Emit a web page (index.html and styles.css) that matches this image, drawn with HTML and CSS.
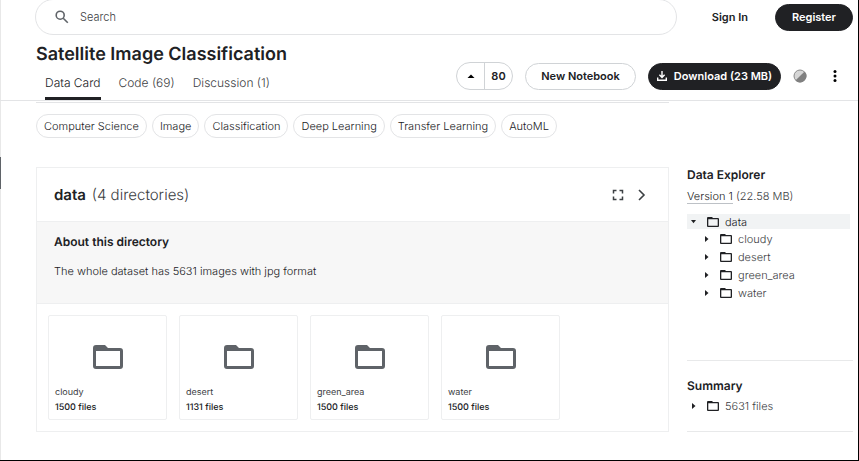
FILE: index.html
```html
<!DOCTYPE html>
<html lang="en">
<head>
    <meta charset="UTF-8">
    <meta name="viewport" content="width=device-width, initial-scale=1.0">
    <title>Satellite Image Classification</title>
    <link rel="stylesheet" href="styles.css">
</head>
<body>
    <svg class="defs" aria-hidden="true">
        <symbol id="folder" viewBox="0 0 30 24">
            <path fill-rule="evenodd" d="M3 0h9l3 3h12a3 3 0 0 1 3 3v15a3 3 0 0 1-3 3H3a3 3 0 0 1-3-3V3a3 3 0 0 1 3-3zM3 6v15h24V6z"/>
        </symbol>
        <symbol id="folder-small" viewBox="0 0 12 10">
            <path fill-rule="evenodd" d="M1 0h4l1 1h5a1 1 0 0 1 1 1v7a1 1 0 0 1-1 1H1a1 1 0 0 1-1-1V1a1 1 0 0 1 1-1zM1.3 2.3v6.4h9.4V2.3z"/>
        </symbol>
    </svg>

    <div class="page">
        <header class="header">
            <div class="topbar">
                <label class="search">
                    <svg width="14" height="14" viewBox="0 0 14 14" fill="none" stroke="#5f6368" stroke-width="1.6" aria-hidden="true">
                        <circle cx="5.2" cy="5.2" r="4"/>
                        <path d="M8.2 8.2l4.6 4.6"/>
                    </svg>
                    <input type="search" placeholder="Search" aria-label="Search">
                </label>
                <a class="sign-in" href="#">Sign In</a>
                <button class="btn btn-dark register">Register</button>
            </div>

            <div class="title-bar">
                <div class="heading">
                    <h1>Satellite Image Classification</h1>
                    <nav class="tabs">
                        <a class="active" href="#">Data Card</a>
                        <a href="#">Code (69)</a>
                        <a href="#">Discussion (1)</a>
                    </nav>
                </div>
                <div class="actions">
                    <div class="vote">
                        <button aria-label="Upvote">
                            <svg width="8" height="4" viewBox="0 0 8 4" aria-hidden="true"><path d="M.5 4L4 .5 7.5 4z"/></svg>
                        </button>
                        <button class="count">80</button>
                    </div>
                    <button class="btn notebook">New Notebook</button>
                    <button class="btn btn-dark download">
                        <svg width="10" height="10" viewBox="0 0 10 10" fill="none" stroke="#fff" aria-hidden="true">
                            <path stroke-width="1.4" d="M5 0v6M2.4 3.8L5 6.4l2.6-2.6M.7 6.5v2.8h8.6V6.5"/>
                        </svg>
                        Download (23 MB)
                    </button>
                    <button class="icon-btn" aria-label="Usability">
                        <svg width="14" height="14" viewBox="0 0 14 14" aria-hidden="true">
                            <circle cx="7" cy="7" r="6" fill="#d6d6d6" stroke="#8a8a8a"/>
                            <path fill="#808080" d="M11.6 2.4A6.5 6.5 0 1 1 2.4 11.6z"/>
                        </svg>
                    </button>
                    <button class="icon-btn" aria-label="More options">
                        <svg width="4" height="14" viewBox="0 0 4 14" aria-hidden="true">
                            <circle cx="2" cy="2.5" r="1.5"/>
                            <circle cx="2" cy="7" r="1.5"/>
                            <circle cx="2" cy="11.5" r="1.5"/>
                        </svg>
                    </button>
                </div>
            </div>
        </header>

        <div class="container">
            <main class="main-content">
                <div class="tags">
                    <a href="#">Computer Science</a>
                    <a href="#">Image</a>
                    <a href="#">Classification</a>
                    <a href="#">Deep Learning</a>
                    <a href="#">Transfer Learning</a>
                    <a href="#">AutoML</a>
                </div>

                <section class="card">
                    <div class="card-header">
                        <h2>data <span>(4 directories)</span></h2>
                        <button class="icon-btn" aria-label="Fullscreen">
                            <svg width="12" height="12" viewBox="0 0 12 12" fill="none" stroke="#3c4043" stroke-width="1.5" aria-hidden="true">
                                <path d="M1.5 4.5v-3h3M7.5 1.5h3v3M10.5 7.5v3h-3M4.5 10.5h-3v-3"/>
                            </svg>
                        </button>
                        <button class="icon-btn" aria-label="Next">
                            <svg width="8" height="12" viewBox="0 0 8 12" fill="none" stroke="#3c4043" stroke-width="1.6" aria-hidden="true">
                                <path d="M1 1l5 5-5 5"/>
                            </svg>
                        </button>
                    </div>
                    <div class="about">
                        <h3>About this directory</h3>
                        <p>The whole dataset has 5631 images with jpg format</p>
                    </div>
                    <div class="tiles">
                        <a class="tile" href="#">
                            <svg class="tile-icon" aria-hidden="true"><use href="#folder"/></svg>
                            <span>cloudy</span>
                            <strong>1500 files</strong>
                        </a>
                        <a class="tile" href="#">
                            <svg class="tile-icon" aria-hidden="true"><use href="#folder"/></svg>
                            <span>desert</span>
                            <strong>1131 files</strong>
                        </a>
                        <a class="tile" href="#">
                            <svg class="tile-icon" aria-hidden="true"><use href="#folder"/></svg>
                            <span>green_area</span>
                            <strong>1500 files</strong>
                        </a>
                        <a class="tile" href="#">
                            <svg class="tile-icon" aria-hidden="true"><use href="#folder"/></svg>
                            <span>water</span>
                            <strong>1500 files</strong>
                        </a>
                    </div>
                </section>
            </main>

            <aside class="sidebar">
                <section class="explorer">
                    <h3>Data Explorer</h3>
                    <p class="version"><a href="#">Version 1</a> (22.58 MB)</p>
                    <ul class="tree">
                        <li class="row selected"><i class="caret open"></i><svg class="row-icon" aria-hidden="true"><use href="#folder-small"/></svg>data</li>
                        <li class="row child"><i class="caret"></i><svg class="row-icon" aria-hidden="true"><use href="#folder-small"/></svg>cloudy</li>
                        <li class="row child"><i class="caret"></i><svg class="row-icon" aria-hidden="true"><use href="#folder-small"/></svg>desert</li>
                        <li class="row child"><i class="caret"></i><svg class="row-icon" aria-hidden="true"><use href="#folder-small"/></svg>green_area</li>
                        <li class="row child"><i class="caret"></i><svg class="row-icon" aria-hidden="true"><use href="#folder-small"/></svg>water</li>
                    </ul>
                </section>
                <section class="summary">
                    <h3>Summary</h3>
                    <div class="row"><i class="caret"></i><svg class="row-icon" aria-hidden="true"><use href="#folder-small"/></svg>5631 files</div>
                </section>
            </aside>
        </div>
        <div class="nav-marker"></div>
    </div>
</body>
</html>
```
FILE: styles.css
```css
* {
    box-sizing: border-box;
}

body {
    margin: 0;
    font-family: Inter, "Liberation Sans", sans-serif;
    font-size: 11px;
    font-weight: 300;
    line-height: 16px;
    text-rendering: geometricPrecision;
    color: #202124;
    background: #fff;
}

h1, h2, h3, p, ul {
    margin: 0;
    padding: 0;
}

a {
    color: inherit;
    text-decoration: none;
}

button {
    font: inherit;
    color: inherit;
    background: none;
    border: none;
    padding: 0;
    cursor: pointer;
}

svg {
    display: block;
    flex: none;
}

.defs {
    display: none;
}

.page {
    position: relative;
    min-height: 100vh;
    border: solid #000;
    border-width: 0 1px 1px 0;
    box-shadow: inset 1px 0 #e8e8e8;
}

/* dark marker of the collapsed navigation */
.nav-marker {
    position: absolute;
    left: 0;
    top: 157px;
    width: 1px;
    height: 32px;
    background: #5f6368;
}

/* header */
.header {
    border-bottom: 1px solid #e3e4e6;
}

.topbar {
    display: flex;
    align-items: center;
    height: 34px;
    padding: 0 5px 0 35px;
}

.search {
    flex: 1;
    display: flex;
    align-items: center;
    gap: 11px;
    height: 36px;
    padding: 0 19px;
    border: 1px solid #e3e4e6;
    border-radius: 18px;
}

.search input {
    flex: 1;
    font: inherit;
    color: inherit;
    border: none;
    outline: none;
    padding: 0;
    background: none;
}

.search input::placeholder {
    color: #3c4043;
    opacity: 1;
}

.sign-in {
    padding: 0 27px 0 35px;
    font-weight: 600;
}

.btn {
    display: flex;
    align-items: center;
    justify-content: center;
    height: 27px;
    border: 1px solid #d0d3d6;
    border-radius: 14px;
    font-weight: 600;
}

.btn-dark {
    background: #202124;
    border-color: #202124;
    color: #fff;
}

.register {
    width: 78px;
}

.title-bar {
    display: flex;
    align-items: center;
    justify-content: space-between;
    height: 66px;
    padding: 0 19px 0 36px;
}

.heading {
    display: flex;
    flex-direction: column;
    justify-content: space-between;
    height: 100%;
    padding-top: 9px;
}

h1 {
    font-size: 18px;
    line-height: 24px;
    font-weight: 600;
}

.tabs {
    display: flex;
    gap: 18px;
    padding-left: 9px;
    font-size: 12px;
    color: #3c4043;
}

.tabs a {
    height: 26px;
    line-height: 17px;
    border-bottom: 3px solid transparent;
}

.tabs .active {
    color: #202124;
    border-color: #202124;
}

.actions {
    display: flex;
    align-items: center;
    gap: 12px;
    padding-top: 18px;
}

.vote {
    display: flex;
    height: 28px;
    border: 1px solid #d0d3d6;
    border-radius: 14px;
}

.vote button {
    display: flex;
    align-items: center;
    justify-content: center;
    width: 27px;
}

.vote .count {
    width: 28px;
    border-left: 1px solid #d0d3d6;
    font-weight: 600;
}

.notebook {
    width: 111px;
}

.download {
    width: 133px;
    gap: 7px;
}

.actions .icon-btn + .icon-btn {
    padding: 0 2px 0 14px;
}

/* content */
.container {
    display: flex;
    gap: 18px;
    padding: 1px 5px 0 36px;
}

.main-content {
    flex: 1;
    border-top: 1px solid #e3e4e6;
}

.tags {
    display: flex;
    gap: 5px;
    padding-top: 11px;
    color: #202124;
}

.tags a {
    height: 24px;
    line-height: 22px;
    padding: 0 7px;
    border: 1px solid #e3e4e6;
    border-radius: 12px;
}

.card {
    margin-top: 29px;
    border: 1px solid #eeeff0;
}

.card-header {
    display: flex;
    align-items: center;
    gap: 14px;
    height: 53px;
    padding: 0 22px 0 17px;
}

.card-header h2 {
    flex: 1;
    font-size: 15px;
    font-weight: 600;
}

.card-header span {
    margin-left: 2px;
    font-weight: 300;
    color: #3c4043;
}

.about {
    height: 83px;
    padding: 12px 17px;
    background: #f7f7f7;
    border: solid #eeeff0;
    border-width: 1px 0;
}

h3 {
    font-size: 12px;
    font-weight: 600;
}

.about p {
    margin-top: 13px;
    color: #202124;
}

.tiles {
    display: flex;
    flex-wrap: wrap;
    gap: 12px;
    padding: 11px;
}

.tile {
    display: flex;
    flex-direction: column;
    width: 119px;
    height: 105px;
    padding: 29px 6px 0;
    border: 1px solid #eeeff0;
    border-radius: 2px;
    font-size: 9px;
    font-weight: 400;
    line-height: 15px;
    color: #3c4043;
}

.tile-icon {
    width: 30px;
    height: 24px;
    margin: 0 auto 16px;
    fill: #5f6368;
}

.tile strong {
    font-weight: 500;
    color: #202124;
}

/* sidebar */
.sidebar {
    width: 166px;
    padding-top: 65px;
    color: #3c4043;
}

.sidebar h3 {
    color: #202124;
}

.explorer {
    height: 194px;
    border-bottom: 1px solid #e8e9ea;
}

.version {
    margin-top: 5px;
}

.version a {
    color: #202124;
    border-bottom: 1px solid #bdc1c6;
}

.tree {
    margin: 10px 3px 0 0;
    list-style: none;
}

.row {
    display: flex;
    align-items: center;
    height: 18px;
    padding-left: 4px;
}

.selected {
    height: 15px;
    margin-bottom: 1px;
    background: #f1f3f4;
    color: #202124;
}

.child {
    padding-left: 17px;
}

.caret {
    width: 5px;
    height: 6px;
    margin-right: 11px;
    background: #202124;
    clip-path: polygon(20% 0, 90% 50%, 20% 100%);
}

.caret.open {
    clip-path: polygon(0 25%, 100% 25%, 50% 80%);
}

.row-icon {
    width: 12px;
    height: 10px;
    margin-right: 6px;
    fill: #202124;
}

.summary {
    height: 71px;
    padding-top: 17px;
    border-bottom: 1px solid #e8e9ea;
}

.summary .row {
    margin-top: 3px;
}
```
